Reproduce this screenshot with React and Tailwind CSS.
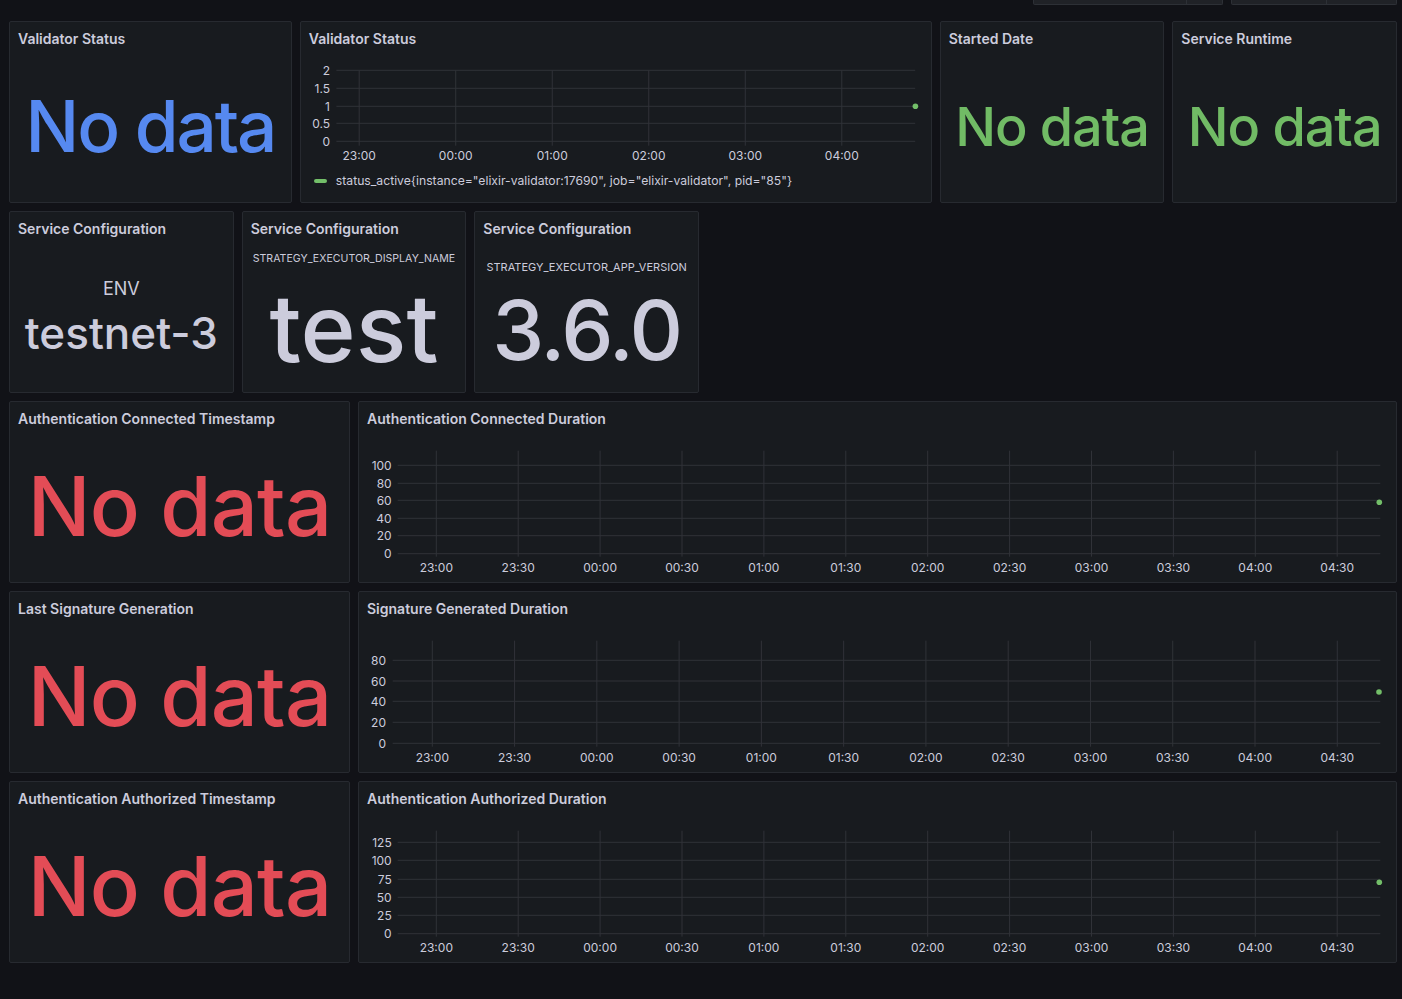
import React from "react";

const GRID = "#303238";
const TXT = "#ccccdc";
const DOT = "#73bf69";

function Panel({ title, className = "", children }) {
  return (
    <div className={`flex flex-col rounded-[2px] border border-[#272a30] bg-[#181b1f] ${className}`}>
      <div className="flex h-[32px] shrink-0 items-center px-[8px] text-[14px] font-semibold text-[#ccccdc]">
        {title}
      </div>
      {children}
    </div>
  );
}

function NoData({ color, size }) {
  return (
    <div className="flex flex-1 items-center justify-center pb-[3px]">
      <span className={`${color} ${size} font-medium leading-none`}>No data</span>
    </div>
  );
}

// coords are measured in the panel's outer box; viewBox skips border + title row
function TimeChart({ width, height, yTicks, labelX, x0, x1, xTicks, vTop, vBottom, xLabelY, dot }) {
  return (
    <svg width={width} height={height} viewBox={`1 33 ${width} ${height}`} className="block shrink-0">
      {yTicks.map((t) => (
        <g key={t.l}>
          <line x1={x0} x2={x1} y1={t.y} y2={t.y} stroke={GRID} strokeWidth="1" />
          <text x={labelX} y={t.y} textAnchor="end" dominantBaseline="central" fontSize="12" fill={TXT}>
            {t.l}
          </text>
        </g>
      ))}
      {xTicks.map((t) => (
        <g key={t.l}>
          <line x1={t.x} x2={t.x} y1={vTop} y2={vBottom} stroke={GRID} strokeWidth="1" />
          <text x={t.x} y={xLabelY} textAnchor="middle" dominantBaseline="central" fontSize="12" fill={TXT}>
            {t.l}
          </text>
        </g>
      ))}
      <circle cx={dot[0]} cy={dot[1]} r="2.8" fill={DOT} />
    </svg>
  );
}

const halfHours = ["23:00", "23:30", "00:00", "00:30", "01:00", "01:30", "02:00", "02:30", "03:00", "03:30", "04:00", "04:30"];

const ticks = (start, step) => halfHours.map((l, i) => ({ l, x: start + step * i }));

function ServiceConfig({ name, value, nameCls, valueCls, pad, gap }) {
  return (
    <Panel title="Service Configuration" className="col-span-4">
      <div className={`flex flex-1 flex-col items-center ${pad}`}>
        <span className={`${nameCls} leading-none text-[#ccccdc]`}>{name}</span>
        <span className={`${gap} ${valueCls} font-medium leading-none text-[#ccccdc]`}>{value}</span>
      </div>
    </Panel>
  );
}

export default function App() {
  return (
    <div className="min-h-screen bg-[#111217] font-['Inter','Liberation_Sans',sans-serif]">
      {/* bottom edge of the time-picker controls, scrolled mostly out of view */}
      <div className="flex h-[5px] justify-end gap-[8px] pr-[5px]">
        <div className="flex w-[190px] rounded-b-[2px] border-x border-b border-[#2d3036] bg-[#202227]">
          <div className="flex-1 border-r border-[#2d3036]" />
          <div className="w-[35px]" />
        </div>
        <div className="flex w-[166px] rounded-b-[2px] border-x border-b border-[#2d3036] bg-[#202227]">
          <div className="flex-1 border-r border-[#2d3036]" />
          <div className="w-[69px]" />
        </div>
      </div>

      <div className="mt-[16px] grid grid-cols-[repeat(24,minmax(0,1fr))] auto-rows-[182px] gap-[8px] pl-[9px] pr-[5px]">
        <Panel title="Validator Status" className="col-span-5">
          <NoData color="text-[#5689f0]" size="text-[71px] tracking-[-0.03em]" />
        </Panel>

        <Panel title="Validator Status" className="col-span-11">
          <TimeChart
            width={629}
            height={116}
            yTicks={[
              { l: "2", y: 49.3 },
              { l: "1.5", y: 67.3 },
              { l: "1", y: 85.3 },
              { l: "0.5", y: 102.3 },
              { l: "0", y: 120.3 },
            ]}
            labelX={30}
            x0={36.4}
            x1={615.2}
            xTicks={["23:00", "00:00", "01:00", "02:00", "03:00", "04:00"].map((l, i) => ({ l, x: 59.2 + 96.52 * i }))}
            vTop={49.3}
            vBottom={124.7}
            xLabelY={134.7}
            dot={[615.4, 85.3]}
          />
          <div className="flex h-[22px] items-center gap-[9px] pl-[13px] text-[12.2px] text-[#ccccdc]">
            <span className="h-[4px] w-[13px] rounded-full bg-[#73bf69]" />
            <span>status_active{'{'}instance="elixir-validator:17690", job="elixir-validator", pid="85"{'}'}</span>
          </div>
        </Panel>

        <Panel title="Started Date" className="col-span-4">
          <NoData color="text-[#71bb65]" size="text-[54px] tracking-[-0.02em]" />
        </Panel>
        <Panel title="Service Runtime" className="col-span-4">
          <NoData color="text-[#71bb65]" size="text-[54px] tracking-[-0.02em]" />
        </Panel>

        <ServiceConfig name="ENV" value="testnet-3" nameCls="text-[18px]" valueCls="text-[44px]" pad="pt-[36px]" gap="mt-[13px]" />
        <ServiceConfig
          name="STRATEGY_EXECUTOR_DISPLAY_NAME"
          value="test"
          nameCls="text-[10.6px]"
          valueCls="text-[94px]"
          pad="pt-[10px]"
          gap="mt-[16px]"
        />
        <ServiceConfig
          name="STRATEGY_EXECUTOR_APP_VERSION"
          value="3.6.0"
          nameCls="text-[11px]"
          valueCls="text-[83px] tracking-[-0.025em]"
          pad="pt-[18px]"
          gap="mt-[16px]"
        />
        <div className="col-span-12" />

        <Panel title="Authentication Connected Timestamp" className="col-span-6">
          <NoData color="text-[#e34c56]" size="text-[83px] tracking-[-0.01em]" />
        </Panel>
        <Panel title="Authentication Connected Duration" className="col-span-18">
          <TimeChart
            width={1036}
            height={148}
            yTicks={[
              { l: "100", y: 64.3 },
              { l: "80", y: 82.3 },
              { l: "60", y: 99.3 },
              { l: "40", y: 117.3 },
              { l: "20", y: 134.7 },
              { l: "0", y: 152.7 },
            ]}
            labelX={33.7}
            x0={39.7}
            x1={1022.3}
            xTicks={ticks(78.3, 81.9)}
            vTop={49.7}
            vBottom={155.7}
            xLabelY={166.7}
            dot={[1021.3, 101.3]}
          />
        </Panel>

        <Panel title="Last Signature Generation" className="col-span-6">
          <NoData color="text-[#e34c56]" size="text-[83px] tracking-[-0.01em]" />
        </Panel>
        <Panel title="Signature Generated Duration" className="col-span-18">
          <TimeChart
            width={1036}
            height={148}
            yTicks={[
              { l: "80", y: 69.3 },
              { l: "60", y: 90 },
              { l: "40", y: 110.3 },
              { l: "20", y: 131.3 },
              { l: "0", y: 152.3 },
            ]}
            labelX={28}
            x0={34.7}
            x1={1022.3}
            xTicks={ticks(74.3, 82.27)}
            vTop={49.7}
            vBottom={155.7}
            xLabelY={166.7}
            dot={[1021, 101]}
          />
        </Panel>

        <Panel title="Authentication Authorized Timestamp" className="col-span-6">
          <NoData color="text-[#e34c56]" size="text-[83px] tracking-[-0.01em]" />
        </Panel>
        <Panel title="Authentication Authorized Duration" className="col-span-18">
          <TimeChart
            width={1036}
            height={148}
            yTicks={[
              { l: "125", y: 61.3 },
              { l: "100", y: 79.3 },
              { l: "75", y: 98.3 },
              { l: "50", y: 116.3 },
              { l: "25", y: 134.3 },
              { l: "0", y: 152.7 },
            ]}
            labelX={33.7}
            x0={39.7}
            x1={1022.3}
            xTicks={ticks(78.3, 81.9)}
            vTop={49.7}
            vBottom={155.7}
            xLabelY={166.7}
            dot={[1021.3, 101.3]}
          />
        </Panel>
      </div>
    </div>
  );
}
